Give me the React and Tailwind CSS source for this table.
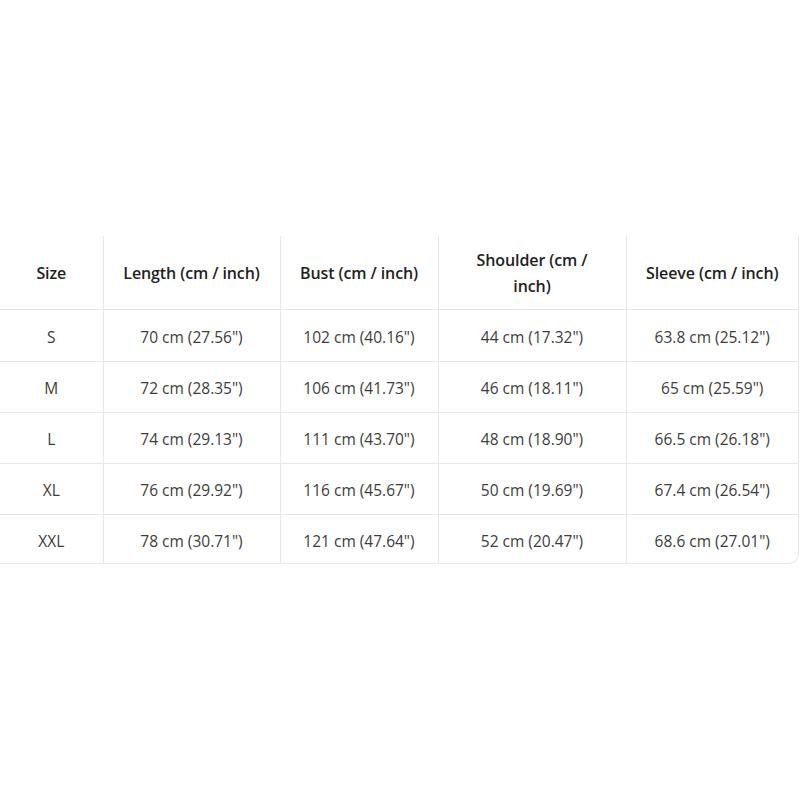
const rows = [
  ['S', '70 cm (27.56")', '102 cm (40.16")', '44 cm (17.32")', '63.8 cm (25.12")'],
  ['M', '72 cm (28.35")', '106 cm (41.73")', '46 cm (18.11")', '65 cm (25.59")'],
  ['L', '74 cm (29.13")', '111 cm (43.70")', '48 cm (18.90")', '66.5 cm (26.18")'],
  ['XL', '76 cm (29.92")', '116 cm (45.67")', '50 cm (19.69")', '67.4 cm (26.54")'],
  ['XXL', '78 cm (30.71")', '121 cm (47.64")', '52 cm (20.47")', '68.6 cm (27.01")'],
];

const headers = [
  'Size',
  'Length (cm / inch)',
  'Bust (cm / inch)',
  <>Shoulder (cm /<br />inch)</>,
  'Sleeve (cm / inch)',
];

export default function App() {
  return (
    <div className="w-[800px] h-[800px] bg-white pt-[236px] font-['Open_Sans',sans-serif]">
      <div className="w-[799px] border-r border-b border-[#e8e8e8] rounded-br-[10px] overflow-hidden">
        <table className="w-full border-collapse table-fixed">
          <colgroup>
            <col className="w-[103px]" />
            <col className="w-[177px]" />
            <col className="w-[158px]" />
            <col className="w-[188px]" />
            <col />
          </colgroup>
          <thead>
            <tr className="h-[73px] border-b border-[#e8e8e8]">
              {headers.map((h, i) => (
                <th
                  key={i}
                  className={`font-semibold text-[16px] tracking-[-0.1px] text-[#1f1f1f] leading-[26px] text-center px-[6px] pt-[2px] whitespace-nowrap ${i < 4 ? 'border-r border-[#e8e8e8]' : ''}`}
                >
                  {h}
                </th>
              ))}
            </tr>
          </thead>
          <tbody>
            {rows.map((r, ri) => (
              <tr key={r[0]} className={`${ri === 0 ? 'h-[52px]' : ri === 4 ? 'h-[49px]' : 'h-[51px]'} ${ri < 4 ? 'border-b border-[#e8e8e8]' : ''}`}>
                {r.map((c, i) => (
                  <td key={i} className={`text-center text-[15.5px] text-[#3d3d3d] pt-[5px] ${i < 4 ? 'border-r border-[#e8e8e8]' : ''}`}>
                    {c}
                  </td>
                ))}
              </tr>
            ))}
          </tbody>
        </table>
      </div>
    </div>
  );
}
